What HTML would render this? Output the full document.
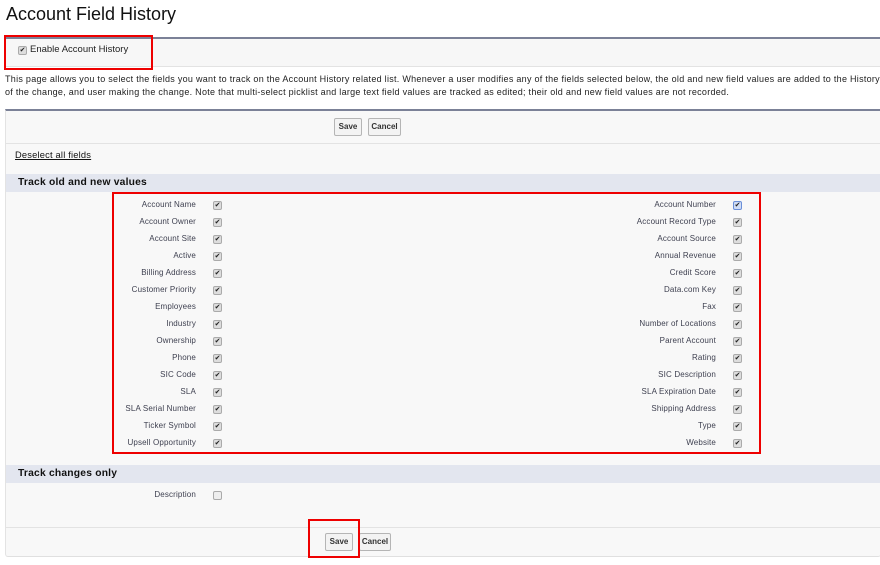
<!DOCTYPE html>
<html><head><style>
body{margin:0;width:880px;height:565px;background:#fff;font-family:"Liberation Sans",Arial,sans-serif;position:relative;overflow:hidden;color:#222}
.a{position:absolute}
.cb{position:absolute;width:7px;height:7px;border:1px solid #aaa;border-radius:2px;background:#ddd;font-size:7px;line-height:7px;text-align:center;color:#222}
.lbl{position:absolute;font-size:8px;letter-spacing:0.15px;color:#3d3f4f;text-align:right;white-space:nowrap}
.btn{position:absolute;height:16px;border:1px solid #b5b5b5;border-radius:2px;background:#f3f3f3;font-size:8px;font-weight:bold;line-height:16px;text-align:center;color:#333}
.red{position:absolute;border:2px solid #e00}
</style></head><body>
<div class="a" style="left:6px;top:4px;font-size:18px;color:#111">Account Field History</div>
<div class="a" style="left:5px;top:37px;width:875px;height:27px;background:#f7f7f7;border-top:2px solid #7b8197;border-bottom:1px solid #e3e3e3"></div>
<div class="cb" style="left:18px;top:46px">✔</div>
<div class="a" style="left:30px;top:44px;font-size:9.5px;color:#222">Enable Account History</div>
<div class="red" style="left:4px;top:35px;width:145px;height:31px"></div>
<div class="a" style="left:5px;top:73px;font-size:9px;letter-spacing:0.28px;line-height:12.5px;color:#222;width:900px;white-space:nowrap">This page allows you to select the fields you want to track on the Account History related list. Whenever a user modifies any of the fields selected below, the old and new field values are added to the History<br>of the change, and user making the change. Note that multi-select picklist and large text field values are tracked as edited; their old and new field values are not recorded.</div>
<div class="a" style="left:5px;top:109px;width:875px;height:445px;background:#f8f8f8;border-top:2px solid #7b8197;border-left:1px solid #e3e3e3;border-bottom:1px solid #e0e0e0;border-radius:0 0 3px 3px"></div>
<div class="btn" style="left:334px;top:118px;width:26px">Save</div>
<div class="btn" style="left:368px;top:118px;width:31px">Cancel</div>
<div class="a" style="left:6px;top:143px;width:874px;height:1px;background:#e3e3e3"></div>
<div class="a" style="left:15px;top:150px;font-size:9.3px;letter-spacing:0.2px;text-decoration:underline;color:#111">Deselect all fields</div>
<div class="a" style="left:6px;top:174px;width:874px;height:18px;background:#e3e6ef"></div>
<div class="a" style="left:18px;top:177px;font-size:10.3px;letter-spacing:0.2px;font-weight:bold;color:#111">Track old and new values</div>
<div class="a" style="left:6px;top:465px;width:874px;height:18px;background:#e3e6ef"></div>
<div class="a" style="left:18px;top:468px;font-size:10.3px;letter-spacing:0.2px;font-weight:bold;color:#111">Track changes only</div>
<div class="lbl" style="right:684px;top:490px">Description</div>
<div class="cb" style="left:213px;top:491px;background:#eee"></div>
<div class="a" style="left:6px;top:527px;width:874px;height:1px;background:#e3e3e3"></div>
<div class="btn" style="left:325px;top:533px;width:26px">Save</div>
<div class="btn" style="left:359px;top:533px;width:30px">Cancel</div>
<div class="red" style="left:308px;top:519px;width:48px;height:35px"></div>
<div class="red" style="left:112px;top:192px;width:645px;height:258px"></div>
<div id="rows"></div>
<script>
var L=["Account Name","Account Owner","Account Site","Active","Billing Address","Customer Priority","Employees","Industry","Ownership","Phone","SIC Code","SLA","SLA Serial Number","Ticker Symbol","Upsell Opportunity"];
var R=["Account Number","Account Record Type","Account Source","Annual Revenue","Credit Score","Data.com Key","Fax","Number of Locations","Parent Account","Rating","SIC Description","SLA Expiration Date","Shipping Address","Type","Website"];
var h="";
for(var i=0;i<15;i++){var y=200+i*17;
h+='<div class="lbl" style="right:684px;top:'+y+'px">'+L[i]+'</div><div class="cb" style="left:213px;top:'+(y+1)+'px">✔</div>';
h+='<div class="lbl" style="right:164px;top:'+y+'px">'+R[i]+'</div><div class="cb" style="left:733px;top:'+(y+1)+'px'+(i==0?';border-color:#6a8fd8;background:#cfdcf5':'')+'">✔</div>';}
document.getElementById("rows").innerHTML=h;
</script>
</body></html>
